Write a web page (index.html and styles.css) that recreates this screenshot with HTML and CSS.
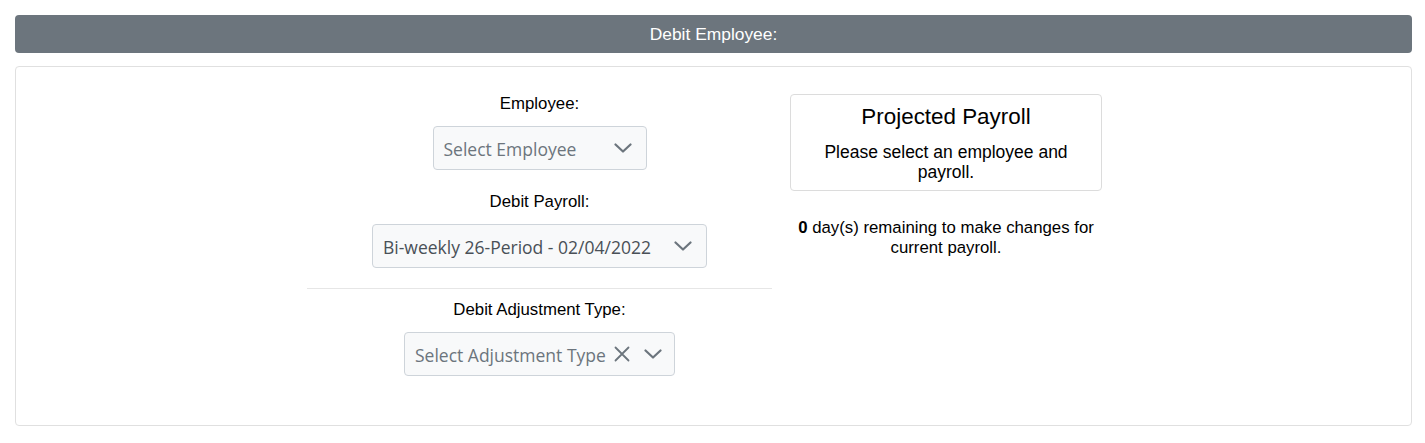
FILE: index.html
```html
<!DOCTYPE html>
<html lang="en">
<head>
<meta charset="utf-8">
<title>Debit Employee</title>
<link rel="stylesheet" href="styles.css">
</head>
<body>
<div class="page">
  <div class="header-bar">Debit Employee:</div>
  <div class="card">
    <div class="card-row">
      <div class="col-left">
        <div class="field">
          <div class="label">Employee:</div>
          <div class="select select-employee">
            <span class="select-text placeholder">Select Employee</span>
            <svg class="chev" viewBox="0 0 18 10" width="18" height="10"><path d="M1.5 1.5 L9 8.5 L16.5 1.5" fill="none" stroke="currentColor" stroke-width="2.2" stroke-linecap="round" stroke-linejoin="round"/></svg>
          </div>
        </div>
        <div class="field">
          <div class="label">Debit Payroll:</div>
          <div class="select select-payroll">
            <span class="select-text value">Bi-weekly 26-Period - 02/04/2022</span>
            <svg class="chev" viewBox="0 0 18 10" width="18" height="10"><path d="M1.5 1.5 L9 8.5 L16.5 1.5" fill="none" stroke="currentColor" stroke-width="2.2" stroke-linecap="round" stroke-linejoin="round"/></svg>
          </div>
        </div>
        <hr class="divider">
        <div class="field">
          <div class="label">Debit Adjustment Type:</div>
          <div class="select select-adjust">
            <span class="select-text placeholder">Select Adjustment Type</span>
            <svg class="clear" viewBox="0 0 16 16" width="16" height="16"><path d="M1.5 1.5 L14.5 14.5 M14.5 1.5 L1.5 14.5" fill="none" stroke="currentColor" stroke-width="1.8" stroke-linecap="round"/></svg>
            <svg class="chev" viewBox="0 0 18 10" width="18" height="10"><path d="M1.5 1.5 L9 8.5 L16.5 1.5" fill="none" stroke="currentColor" stroke-width="2.2" stroke-linecap="round" stroke-linejoin="round"/></svg>
          </div>
        </div>
      </div>
      <div class="col-right">
        <div class="projection">
          <div class="projection-title">Projected Payroll</div>
          <div class="projection-text">Please select an employee and payroll.</div>
        </div>
        <div class="remaining"><b>0</b> day(s) remaining to make changes for current payroll.</div>
      </div>
    </div>
  </div>
</div>
</body>
</html>
```

FILE: styles.css
```css
* { box-sizing: border-box; }

body {
  margin: 0;
  background: #ffffff;
  font-family: "Liberation Sans", Arial, sans-serif;
  color: #000;
}

.page {
  padding: 15px 13px 0 15px;
}

.header-bar {
  height: 38px;
  background: #6c757d;
  color: #ffffff;
  border-radius: 4px;
  font-size: 17.4px;
  display: flex;
  align-items: center;
  justify-content: center;
}

.card {
  margin-top: 13px;
  height: 360px;
  border: 1px solid #e0e0e0;
  border-radius: 4px;
  background: #fff;
}

.card-row {
  display: grid;
  grid-template-columns: 465px 312px;
  column-gap: 18px;
  padding-left: 291px;
  padding-top: 25px;
}

.col-left {
  display: flex;
  flex-direction: column;
  align-items: center;
}

.field {
  display: flex;
  flex-direction: column;
  align-items: center;
}

.label {
  font-size: 16.8px;
  line-height: 24px;
  margin-bottom: 10px;
}

.select {
  height: 44px;
  background: #f8f9fa;
  border: 1px solid #ced4da;
  border-radius: 4px;
  display: flex;
  align-items: center;
  padding: 0 14px 0 10px;
  color: #6c757d;
  font-family: "Open Sans", "Noto Sans", sans-serif;
  font-size: 17.5px;
}

.select-text {
  flex: 1;
  white-space: nowrap;
  padding-top: 2px;
}

.select-text.value { color: #495057; }

.select-employee { width: 214px; margin-bottom: 20px; }
.select-payroll { width: 335px; }
.select-adjust { width: 271px; }

.chev { flex: none; color: #6c757d; }
.clear { flex: none; color: #6c757d; margin: 0 14px 0 8px; }

.divider {
  align-self: stretch;
  border: 0;
  border-top: 1px solid #e6e6e6;
  margin: 20px 0 9px;
}

.col-right {
  padding-top: 2px;
  display: flex;
  flex-direction: column;
  align-items: stretch;
}

.projection {
  border: 1px solid #dcdcdc;
  border-radius: 4px;
  padding: 9px 12px 8px;
  text-align: center;
}

.projection-title {
  font-size: 22.4px;
  line-height: 26px;
  margin-bottom: 12px;
}

.projection-text {
  font-size: 17.5px;
  line-height: 20px;
}

.remaining {
  margin-top: 27px;
  text-align: center;
  font-size: 16.8px;
  line-height: 20px;
  padding: 0 4px;
}
```
